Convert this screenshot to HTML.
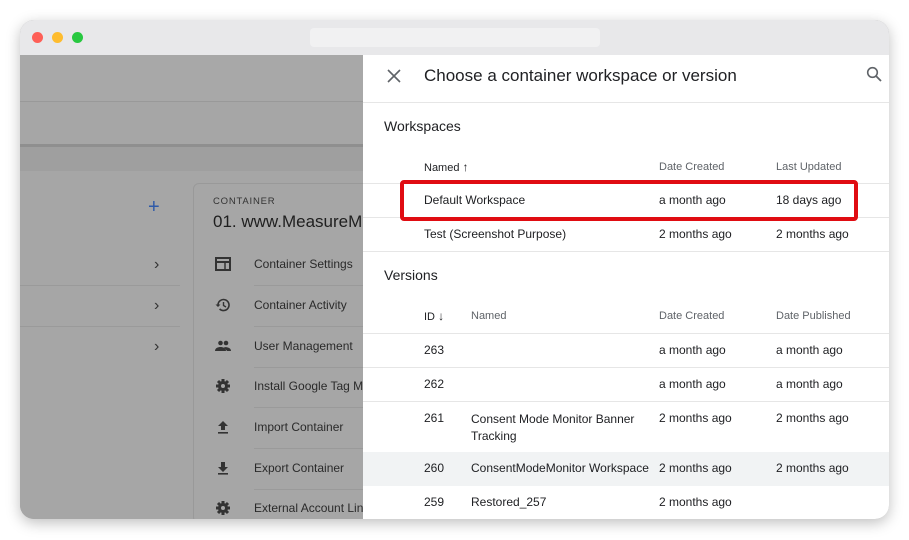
<!DOCTYPE html>
<html><head><meta charset="utf-8">
<style>
*{box-sizing:border-box;margin:0;padding:0}
body{width:909px;height:540px;background:#fff;font-family:"Liberation Sans",Arial,sans-serif;overflow:hidden;position:relative}
.win{position:absolute;left:20px;top:20px;width:869px;height:499px;border-radius:14px;overflow:hidden;background:#a6a6a6;box-shadow:0 4px 14px rgba(0,0,0,.25)}
.tb{position:absolute;left:0;top:0;width:869px;height:35px;background:#e8e8ea}
.dot{position:absolute;top:12px;width:11px;height:11px;border-radius:50%}
.url{position:absolute;left:290px;top:8px;width:290px;height:19px;border-radius:4px;background:#f1f1f2}
.a{position:absolute;color:#222;font-size:12px;white-space:nowrap}
.g{color:#2a2a2a}
.ln{position:absolute;height:1px;background:#9a9a9a}
.p{position:absolute;left:343px;top:35px;width:526px;height:464px;background:#fff}
.pl{position:absolute;left:0;height:1px;background:#e6e6e6;width:526px}
.h{font-size:11px;color:#5f6368}
.t{font-size:12px;color:#202124}
.ic{position:absolute;width:16px;height:16px}
</style></head><body>
<div class="win">
 <div class="tb">
  <div class="dot" style="left:12px;background:#fe5f57"></div>
  <div class="dot" style="left:32px;background:#febc2e"></div>
  <div class="dot" style="left:52px;background:#28c840"></div>
  <div class="url"></div>
 </div>
 <div style="position:absolute;left:0;top:35px;width:343px;height:46px;background:#a8a8a8"></div>
 <div class="ln" style="left:0;top:81px;width:343px;background:#999"></div>
 <div style="position:absolute;left:0;top:82px;width:343px;height:42px;background:#a6a6a6"></div>
 <div style="position:absolute;left:0;top:124px;width:343px;height:3px;background:#8f8f8f"></div>
 <div style="position:absolute;left:0;top:127px;width:343px;height:24px;background:#9f9f9f"></div>
 <div style="position:absolute;left:0;top:151px;width:343px;height:348px;background:#a6a6a6"></div>
 <div class="a" style="left:128px;top:176px;font-size:20px;color:#2f5aa8">+</div>
 <div class="a" style="left:134px;top:236px;font-size:16px;color:#333">›</div>
 <div class="ln" style="left:0;top:265px;width:160px"></div>
 <div class="a" style="left:134px;top:277px;font-size:16px;color:#333">›</div>
 <div class="ln" style="left:0;top:306px;width:160px"></div>
 <div class="a" style="left:134px;top:318px;font-size:16px;color:#333">›</div>
 <div style="position:absolute;left:173px;top:163px;width:200px;height:340px;border:1px solid #999;border-radius:6px;background:#a6a6a6"></div>
 <div class="a" style="left:193px;top:176px;font-size:9.5px;letter-spacing:.8px;color:#333">CONTAINER</div>
 <div class="a" style="left:193px;top:192px;font-size:17px;color:#1f1f1f">01. www.MeasureM</div>
 <svg class="ic" style="left:195px;top:236px" viewBox="0 0 16 16"><rect x="1" y="2" width="14" height="12" fill="none" stroke="#333" stroke-width="2"/><line x1="1" y1="6" x2="15" y2="6" stroke="#333" stroke-width="2"/><line x1="10" y1="6" x2="10" y2="14" stroke="#333" stroke-width="1.5"/></svg>
 <div class="a g" style="left:234px;top:237px">Container Settings</div>
 <div class="ln" style="left:234px;top:265px;width:110px"></div>
 <svg class="ic" style="left:195px;top:277px" viewBox="0 0 16 16"><path d="M3 8a5.5 5.5 0 1 1 1.6 3.9" fill="none" stroke="#333" stroke-width="1.6"/><path d="M0.5 7.5h5L3 10z" fill="#333"/><path d="M8.5 5v3.5l2.5 1.5" fill="none" stroke="#333" stroke-width="1.4"/></svg>
 <div class="a g" style="left:234px;top:278px">Container Activity</div>
 <div class="ln" style="left:234px;top:306px;width:110px"></div>
 <svg class="ic" style="left:195px;top:318px" viewBox="0 0 16 16"><circle cx="5.5" cy="5" r="2.3" fill="#333"/><circle cx="11" cy="5" r="2.3" fill="#333"/><path d="M0 13c0-3 3-4 5.5-4s5.5 1 5.5 4z M9 9.2c2.5-.4 7 .3 7 3.8h-4z" fill="#333"/></svg>
 <div class="a g" style="left:234px;top:319px">User Management</div>
 <div class="ln" style="left:234px;top:347px;width:110px"></div>
 <svg class="ic" style="left:195px;top:358px" viewBox="0 0 16 16"><circle cx="8" cy="8" r="5" fill="#333"/><g stroke="#333" stroke-width="3"><line x1="8" y1="1" x2="8" y2="15"/><line x1="1" y1="8" x2="15" y2="8"/><line x1="3" y1="3" x2="13" y2="13"/><line x1="13" y1="3" x2="3" y2="13"/></g><circle cx="8" cy="8" r="2" fill="#a6a6a6"/></svg>
 <div class="a g" style="left:234px;top:359px">Install Google Tag M</div>
 <div class="ln" style="left:234px;top:387px;width:110px"></div>
 <svg class="ic" style="left:195px;top:399px" viewBox="0 0 16 16"><path d="M8 2l5 5H10v4H6V7H3z" fill="#333"/><rect x="3" y="13" width="10" height="1.6" fill="#333"/></svg>
 <div class="a g" style="left:234px;top:400px">Import Container</div>
 <div class="ln" style="left:234px;top:428px;width:110px"></div>
 <svg class="ic" style="left:195px;top:440px" viewBox="0 0 16 16"><path d="M6 2h4v5h3l-5 5-5-5h3z" fill="#333"/><rect x="3" y="13" width="10" height="1.6" fill="#333"/></svg>
 <div class="a g" style="left:234px;top:441px">Export Container</div>
 <div class="ln" style="left:234px;top:469px;width:110px"></div>
 <svg class="ic" style="left:195px;top:480px" viewBox="0 0 16 16"><circle cx="8" cy="8" r="5" fill="#333"/><g stroke="#333" stroke-width="3"><line x1="8" y1="1" x2="8" y2="15"/><line x1="1" y1="8" x2="15" y2="8"/><line x1="3" y1="3" x2="13" y2="13"/><line x1="13" y1="3" x2="3" y2="13"/></g><circle cx="8" cy="8" r="2" fill="#a6a6a6"/></svg>
 <div class="a g" style="left:234px;top:481px">External Account Lin</div>

 <div class="p">
  <svg style="position:absolute;left:24px;top:14px" width="14" height="14" viewBox="0 0 14 14"><path d="M1 1L13 13M13 1L1 13" stroke="#5f6368" stroke-width="1.6"/></svg>
  <div class="a" style="left:61px;top:11px;font-size:17px;color:#202124">Choose a container workspace or version</div>
  <svg style="position:absolute;left:503px;top:11px" width="16" height="16" viewBox="0 0 16 16"><circle cx="6.5" cy="6.5" r="4.8" fill="none" stroke="#5f6368" stroke-width="1.6"/><line x1="10" y1="10" x2="15" y2="15" stroke="#5f6368" stroke-width="1.8"/></svg>
  <div class="pl" style="top:47px"></div>
  <div class="a" style="left:21px;top:63px;font-size:14px;color:#202124">Workspaces</div>
  <div class="a h" style="left:61px;top:105px;color:#202124">Named <span style="font-size:12px">↑</span></div>
  <div class="a h" style="left:296px;top:106px">Date Created</div>
  <div class="a h" style="left:413px;top:106px">Last Updated</div>
  <div class="pl" style="top:128px"></div>
  <div class="a t" style="left:61px;top:138px">Default Workspace</div>
  <div class="a t" style="left:296px;top:138px">a month ago</div>
  <div class="a t" style="left:413px;top:138px">18 days ago</div>
  <div class="pl" style="top:162px"></div>
  <div class="a t" style="left:61px;top:172px">Test (Screenshot Purpose)</div>
  <div class="a t" style="left:296px;top:172px">2 months ago</div>
  <div class="a t" style="left:413px;top:172px">2 months ago</div>
  <div class="pl" style="top:196px"></div>
  <div style="position:absolute;left:37px;top:125px;width:458px;height:41px;border:4px solid #e00c12;border-radius:4px"></div>
  <div class="a" style="left:21px;top:212px;font-size:14px;color:#202124">Versions</div>
  <div class="a h" style="left:61px;top:254px;color:#202124">ID <span style="font-size:12px">↓</span></div>
  <div class="a h" style="left:108px;top:255px">Named</div>
  <div class="a h" style="left:296px;top:255px">Date Created</div>
  <div class="a h" style="left:413px;top:255px">Date Published</div>
  <div class="pl" style="top:278px"></div>
  <div class="a t" style="left:61px;top:288px">263</div>
  <div class="a t" style="left:296px;top:288px">a month ago</div>
  <div class="a t" style="left:413px;top:288px">a month ago</div>
  <div class="pl" style="top:312px"></div>
  <div class="a t" style="left:61px;top:322px">262</div>
  <div class="a t" style="left:296px;top:322px">a month ago</div>
  <div class="a t" style="left:413px;top:322px">a month ago</div>
  <div class="pl" style="top:346px"></div>
  <div class="a t" style="left:61px;top:356px">261</div>
  <div class="a t" style="left:108px;top:356px;line-height:17px">Consent Mode Monitor Banner<br>Tracking</div>
  <div class="a t" style="left:296px;top:356px">2 months ago</div>
  <div class="a t" style="left:413px;top:356px">2 months ago</div>
  <div style="position:absolute;left:0;top:397px;width:526px;height:34px;background:#f1f3f4"></div>
  <div class="a t" style="left:61px;top:406px">260</div>
  <div class="a t" style="left:108px;top:406px">ConsentModeMonitor Workspace</div>
  <div class="a t" style="left:296px;top:406px">2 months ago</div>
  <div class="a t" style="left:413px;top:406px">2 months ago</div>
  <div class="a t" style="left:61px;top:440px">259</div>
  <div class="a t" style="left:108px;top:440px">Restored_257</div>
  <div class="a t" style="left:296px;top:440px">2 months ago</div>
 </div>
</div>
</body></html>
